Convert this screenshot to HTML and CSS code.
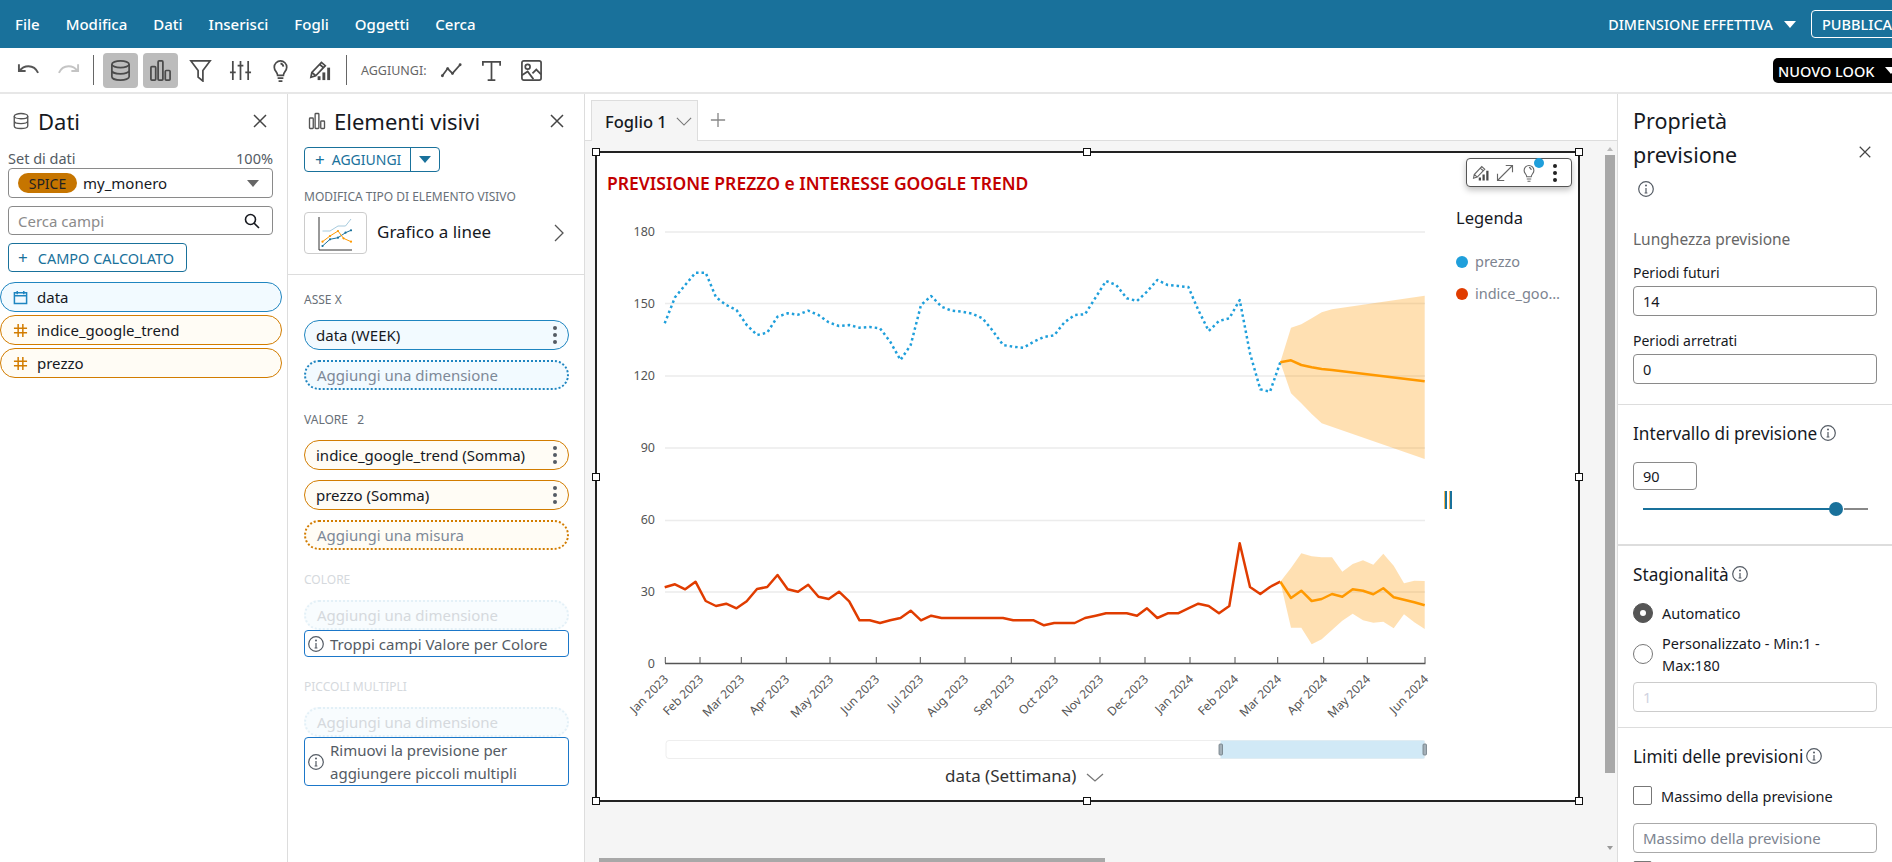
FILE: index.html
```html
<!DOCTYPE html>
<html lang="it">
<head>
    <meta charset="utf-8">
    <title>Analisi - Previsione prezzo</title>
    <link rel="stylesheet" href="styles.css">
</head>
<body>
    <svg class="defs" width="0" height="0">
        <defs>
            <symbol id="i-close" viewBox="0 0 16 16"><path d="M2 2l12 12M14 2L2 14"/></symbol>
            <symbol id="i-info" viewBox="0 0 16 16"><circle cx="8" cy="8" r="7.300"/><path d="M8 7v5M6.600 12h2.800"/><circle class="dot" cx="8" cy="4.400" r="1"/></symbol>
            <symbol id="i-db" viewBox="0 0 24 24"><ellipse cx="12" cy="5.500" rx="9" ry="3.500"/><path d="M3 5.500v13c0 2 4 3.500 9 3.500s9-1.500 9-3.500v-13M3 12c0 2 4 3.500 9 3.500s9-1.500 9-3.500"/></symbol>
            <symbol id="i-bars" viewBox="0 0 24 24"><rect x="2" y="8" width="5" height="14" rx="1"/><rect x="9.500" y="2" width="5" height="20" rx="1"/><rect x="17" y="12" width="5" height="10" rx="1"/></symbol>
            <symbol id="i-kebab" viewBox="0 0 6 20"><circle cx="3" cy="3" r="2"/><circle cx="3" cy="10" r="2"/><circle cx="3" cy="17" r="2"/></symbol>
            <symbol id="i-hash" viewBox="0 0 16 16"><path d="M5.500 1v14M10.500 1v14M1 5.500h14M1 10.500h14"/></symbol>
            <symbol id="i-pencilbars" viewBox="0 0 24 24"><path d="M2 19l1-5L13 3.500l4 3.500L7 17.500zM3 14l4 3.500M11 5.500l4 3.500"/><rect class="solid" x="9" y="18" width="3" height="4"/><rect class="solid" x="14" y="14" width="3" height="8"/><rect class="solid" x="19" y="9" width="3" height="13"/></symbol>
            <symbol id="i-bulb" viewBox="0 0 24 24"><path d="M9 17c0-3-3.500-4.500-3.500-8.500a6.500 6.500 0 0 1 13 0C18.500 12.500 15 14 15 17zM9 20h6M10 23h4M12 4.500a4 4 0 0 1 3 3.500"/></symbol>
        </defs>
    </svg>

    <div class="app">
        <header class="topbar">
            <nav class="menu">
                <span>File</span><span>Modifica</span><span>Dati</span><span>Inserisci</span><span>Fogli</span><span>Oggetti</span><span>Cerca</span>
            </nav>
            <div class="topbar-right">
                <span class="size-label">DIMENSIONE EFFETTIVA</span>
                <span class="caret caret-white"></span>
                <span class="publish">PUBBLICA</span>
            </div>
        </header>

        <div class="toolbar">
            <svg class="tool undo" viewBox="0 0 24 14"><path d="M2 1v7h7M2.500 8C5 4.500 8.500 3 12 3c4.500 0 8 2.500 10 7"/></svg>
            <svg class="tool redo" viewBox="0 0 24 14"><path d="M22 1v7h-7M21.500 8C19 4.500 15.500 3 12 3 7.500 3 4 5.500 2 10"/></svg>
            <span class="tool-sep"></span>
            <span class="tool-btn active"><svg class="tool-icon"><use href="#i-db"/></svg></span>
            <span class="tool-btn active"><svg class="tool-icon"><use href="#i-bars"/></svg></span>
            <span class="tool-btn"><svg class="tool-icon" viewBox="0 0 24 24"><path d="M2 2h20l-7.500 10v11l-5-4v-7z"/></svg></span>
            <span class="tool-btn"><svg class="tool-icon" viewBox="0 0 24 24"><path d="M4 2v20M12 2v20M20 2v20M1 14h6M9 7h6M17 14h6"/></svg></span>
            <span class="tool-btn"><svg class="tool-icon"><use href="#i-bulb"/></svg></span>
            <span class="tool-btn"><svg class="tool-icon"><use href="#i-pencilbars"/></svg></span>
            <span class="tool-sep sep-second"></span>
            <span class="add-label">AGGIUNGI:</span>
            <span class="tool-btn"><svg class="tool-icon" viewBox="0 0 24 24"><path d="M2 18l6-8 5 5 8-9"/><circle class="solid" cx="2.500" cy="17.500" r="1.500"/><circle class="solid" cx="8" cy="10" r="1.500"/><circle class="solid" cx="13" cy="15" r="1.500"/><circle class="solid" cx="21" cy="6" r="1.500"/></svg></span>
            <span class="tool-btn"><svg class="tool-icon" viewBox="0 0 24 24"><path d="M3 7V3h18v4M12 3v19M8 22h8"/></svg></span>
            <span class="tool-btn"><svg class="tool-icon" viewBox="0 0 24 24"><rect x="2" y="2" width="20" height="20" rx="2"/><circle cx="8" cy="8" r="2.500"/><path d="M2 17l6-4 6 8M13 15l4-4 5 5"/></svg></span>
            <span class="new-look">NUOVO LOOK<span class="caret caret-white"></span></span>
        </div>

        <main class="workspace">
            <aside class="panel panel-data">
                <div class="panel-head">
                    <svg class="head-icon"><use href="#i-db"/></svg>
                    <h2>Dati</h2>
                    <svg class="close"><use href="#i-close"/></svg>
                </div>
                <div class="dataset-row"><span>Set di dati</span><span>100%</span></div>
                <div class="box dataset-select">
                    <span class="spice">SPICE</span>
                    <span>my_monero</span>
                    <span class="caret caret-grey"></span>
                </div>
                <div class="box search">
                    <span>Cerca campi</span>
                    <svg class="search-icon" viewBox="0 0 16 16"><circle cx="6.500" cy="6.500" r="5"/><path d="M10 10l5 5"/></svg>
                </div>
                <div class="calc-btn"><span class="plus">+</span>CAMPO CALCOLATO</div>
                <ul class="fields">
                    <li class="field field-date">
                        <svg class="field-icon" viewBox="0 0 16 16"><path d="M1.500 3h13v11.500h-13zM1.500 6h13M4.500 1v3.500M11.500 1v3.500"/></svg>data
                    </li>
                    <li class="field field-num"><svg class="field-icon"><use href="#i-hash"/></svg>indice_google_trend</li>
                    <li class="field field-num"><svg class="field-icon"><use href="#i-hash"/></svg>prezzo</li>
                </ul>
            </aside>

            <aside class="panel panel-visuals">
                <div class="panel-head">
                    <svg class="head-icon"><use href="#i-bars"/></svg>
                    <h2>Elementi visivi</h2>
                    <svg class="close"><use href="#i-close"/></svg>
                </div>
                <div class="add-btn">
                    <span class="add-main"><span class="plus">+</span>AGGIUNGI</span>
                    <span class="add-drop"><span class="caret caret-blue"></span></span>
                </div>
                <div class="well-label type-label">MODIFICA TIPO DI ELEMENTO VISIVO</div>
                <div class="type-row">
                    <span class="type-thumb">
                        <svg viewBox="0 0 61 40" width="61" height="40">
                            <path d="M14 4v33h33" fill="none" stroke="#333" stroke-width="1"/>
                            <path d="M17.500 18H25l8-5h7.500l5.500-7" fill="none" stroke="#8fbcd4" stroke-width="0.800"/>
                            <path d="M17.500 33L25 26.300l8-1.600 7.500-5 5.500-2.400" fill="none" stroke="#19719b" stroke-width="1"/>
                            <path d="M17.500 28.700L25 23l8-5 5.500 7.300 7.500 3.400" fill="none" stroke="#ff9900" stroke-width="1"/>
                            <path d="M17.500 33h0M25 26.300h0M33 24.700h0M40.500 19.700h0M46 17.300h0" fill="none" stroke="#19719b" stroke-width="2.200" stroke-linecap="round"/>
                            <path d="M17.500 28.700h0M25 23h0M33 18h0M38.500 25.300h0M46 28.700h0" fill="none" stroke="#ff9900" stroke-width="2.200" stroke-linecap="round"/>
                        </svg>
                    </span>
                    <span class="type-name">Grafico a linee</span>
                    <svg class="chevron" viewBox="0 0 10 18"><path d="M1 1l8 8-8 8"/></svg>
                </div>
                <div class="wells">
                    <div class="well-label">ASSE X</div>
                    <div class="pill pill-date">data (WEEK)<svg class="kebab"><use href="#i-kebab"/></svg></div>
                    <div class="pill pill-drop pill-drop-date">Aggiungi una dimensione</div>

                    <div class="well-label label-next">VALORE&nbsp;&nbsp;&nbsp;2</div>
                    <div class="pill pill-num">indice_google_trend (Somma)<svg class="kebab"><use href="#i-kebab"/></svg></div>
                    <div class="pill pill-num">prezzo (Somma)<svg class="kebab"><use href="#i-kebab"/></svg></div>
                    <div class="pill pill-drop pill-drop-num">Aggiungi una misura</div>

                    <div class="well-label label-next label-off">COLORE</div>
                    <div class="pill pill-drop pill-off">Aggiungi una dimensione</div>
                    <div class="notice">
                        <svg class="info"><use href="#i-info"/></svg>
                        <span>Troppi campi Valore per Colore</span>
                    </div>

                    <div class="well-label label-next label-off">PICCOLI MULTIPLI</div>
                    <div class="pill pill-drop pill-off">Aggiungi una dimensione</div>
                    <div class="notice notice-tall">
                        <svg class="info"><use href="#i-info"/></svg>
                        <span>Rimuovi la previsione per aggiungere piccoli multipli</span>
                    </div>
                </div>
            </aside>

            <section class="sheet">
                <div class="tabs">
                    <div class="tab">
                        <span>Foglio 1</span>
                        <svg class="tab-chevron" viewBox="0 0 18 10"><path d="M1 1l8 8 8-8"/></svg>
                    </div>
                    <svg class="tab-add" viewBox="0 0 18 18"><path d="M9 1v16M1 9h16"/></svg>
                </div>

                <div class="stage">
                    <div class="visual">
                        <h3 class="visual-title">PREVISIONE PREZZO e INTERESSE GOOGLE TREND</h3>

                        <svg class="chart" viewBox="597 153 981 647">
                            <g class="grid">
                                <path d="M665 232H1425M665 303.500H1425M665 376H1425M665 448H1425M665 520.500H1425M665 592H1425"/>
                            </g>
                            <g class="y-labels">
                                <text x="655" y="236">180</text>
                                <text x="655" y="308">150</text>
                                <text x="655" y="380">120</text>
                                <text x="655" y="452">90</text>
                                <text x="655" y="524">60</text>
                                <text x="655" y="596">30</text>
                                <text x="655" y="668">0</text>
                            </g>

                            <polygon class="band" points="1280.300,362.300 1291,327.700 1301.300,324.300 1311.700,318.300 1321.700,312.300 1332,309.300 1424.700,295.700 1424.700,459 1321.700,423.300 1311.700,414 1301.300,403.300 1291,393.300"/>
                            <polygon class="band" points="1280.300,581.700 1291,568 1301.300,553.300 1311.700,556.300 1321.700,557.300 1332,557.300 1342.300,571.700 1352.700,564 1363,560.300 1373.300,564.700 1383.300,553.700 1393.700,565.700 1404,583.300 1414.300,580.700 1424.700,581 1424.700,629 1414.300,622.300 1404,614.300 1393.700,628.300 1383.300,621.700 1373.300,622.700 1363,620.300 1352.700,613.700 1342.300,620.700 1332,630 1321.700,639.300 1311.700,644.300 1301.300,627.700 1291,627.700"/>

                            <polyline class="line line-blue" points="664.700,323.300 675,297.300 685.200,285 695.500,272.700 705.700,272.700 716,297.300 726.200,305 736.500,310 746.700,325 757,335 767.200,332.700 777.500,316.700 787.700,313.300 798,314.700 808.200,310.700 818.500,315 828.700,322.300 839,326 849.200,325 859.500,327.700 869.700,327 880,328.300 890.200,341.700 900.500,360 910.700,345 921,305 931.200,296 941.500,306.700 951.700,310.700 962,311.700 972.200,313.700 982.500,318.300 992.700,330.700 1003,345 1013.200,346.700 1023.500,347.700 1033.700,341.700 1044,337 1054.200,335.300 1064.500,322.300 1074.700,315 1085,314.300 1095.700,297.300 1106,281 1116.300,285 1126.700,298.300 1137,301 1147,291.700 1157.300,280 1167.700,285 1178,286 1188.300,287 1198.300,310 1208.700,331 1219,321 1229.300,318.300 1239.700,300 1250,353.300 1260.300,389.300 1270,391.700 1280.300,362.300"/>
                            <polyline class="line line-orange" points="1280.300,362.300 1291,360.300 1301.300,365 1311.700,367.300 1321.700,369 1332,370 1424.700,381.300"/>
                            <polyline class="line line-red" points="664.700,587.300 675,584.300 685.200,589.300 695.500,581.700 705.700,601 716,606 726.200,603.700 736.500,608.300 746.700,601.300 757,589 767.200,587 777.500,575 787.700,589.300 798,591.700 808.200,584.700 818.500,596.700 828.700,599 839,591.700 849.200,601.300 859.500,620.300 869.700,620.300 880,623 890.200,620.300 900.500,618 910.700,610.700 921,620.300 931.200,615.700 941.500,618 951.700,618 962,618 972.200,618 982.500,618 992.700,618 1003,618 1013.200,620.300 1023.500,620.300 1033.700,620.300 1044,625.300 1054.200,623 1064.500,623 1074.700,623 1085,618 1095.700,615.700 1106,613.300 1116.300,613.300 1126.700,613.300 1137,615.700 1147,608.300 1157.300,618 1167.700,613.300 1178,613.300 1188.300,608.300 1198.300,603.700 1208.700,606 1219,613.300 1229.300,606 1239.700,543.300 1250,587 1260.300,594 1270,587 1280.300,581.700"/>
                            <polyline class="line line-orange" points="1280.300,581.700 1291,598 1301.300,590.700 1311.700,601 1321.700,599 1332,594 1342.300,596.700 1352.700,589.300 1363,590.700 1373.300,594.300 1383.300,588.300 1393.700,597.300 1404,599.700 1414.300,602.300 1424.700,605.300"/>

                            <path class="axis" d="M665 663.500H1425.500"/>
                            <path class="ticks" d="M665.300 657V663M700 657V663M741.300 657V663M786.300 657V663M830 657V663M876.300 657V663M920.300 657V663M965 657V663M1011.300 657V663M1055 657V663M1100 657V663M1145 657V663M1190 657V663M1235 657V663M1277.700 657V663M1323.700 657V663M1367.300 657V663M1425 657V663"/>
                            <g class="x-labels">
                                <text x="669" y="680" transform="rotate(-45 669 680)">Jan 2023</text>
                                <text x="704" y="680" transform="rotate(-45 704 680)">Feb 2023</text>
                                <text x="745" y="680" transform="rotate(-45 745 680)">Mar 2023</text>
                                <text x="790" y="680" transform="rotate(-45 790 680)">Apr 2023</text>
                                <text x="834" y="680" transform="rotate(-45 834 680)">May 2023</text>
                                <text x="880" y="680" transform="rotate(-45 880 680)">Jun 2023</text>
                                <text x="924" y="680" transform="rotate(-45 924 680)">Jul 2023</text>
                                <text x="969" y="680" transform="rotate(-45 969 680)">Aug 2023</text>
                                <text x="1015" y="680" transform="rotate(-45 1015 680)">Sep 2023</text>
                                <text x="1059" y="680" transform="rotate(-45 1059 680)">Oct 2023</text>
                                <text x="1104" y="680" transform="rotate(-45 1104 680)">Nov 2023</text>
                                <text x="1149" y="680" transform="rotate(-45 1149 680)">Dec 2023</text>
                                <text x="1194" y="680" transform="rotate(-45 1194 680)">Jan 2024</text>
                                <text x="1239" y="680" transform="rotate(-45 1239 680)">Feb 2024</text>
                                <text x="1282" y="680" transform="rotate(-45 1282 680)">Mar 2024</text>
                                <text x="1328" y="680" transform="rotate(-45 1328 680)">Apr 2024</text>
                                <text x="1371" y="680" transform="rotate(-45 1371 680)">May 2024</text>
                                <text x="1429" y="680" transform="rotate(-45 1429 680)">Jun 2024</text>
                            </g>

                            <rect class="range" x="666" y="740.500" width="759" height="18" rx="3"/>
                            <rect class="range-on" x="1220.500" y="740.500" width="204" height="18"/>
                            <rect class="range-grip" x="1219" y="744" width="3.500" height="11" rx="1"/>
                            <rect class="range-grip" x="1423" y="744" width="3.500" height="11" rx="1"/>

                            <text class="axis-title" x="945" y="782">data (Settimana)</text>
                            <path class="axis-chevron" d="M1087 774l8 7 8-7"/>

                            <text class="legend-title" x="1456" y="224">Legenda</text>
                            <circle cx="1462" cy="262" r="6" fill="#1f9fdb"/>
                            <text class="legend-item" x="1475" y="267">prezzo</text>
                            <circle cx="1462" cy="294" r="6" fill="#e03c00"/>
                            <text class="legend-item" x="1475" y="299">indice_goo…</text>

                            <path class="legend-grip-o" d="M1444.500 491v18M1449.500 491v18"/>
                            <path class="legend-grip" d="M1446 491v18M1451 491v18"/>
                        </svg>

                        <div class="visual-menu">
                            <svg class="menu-icon"><use href="#i-pencilbars"/></svg>
                            <svg class="menu-icon" viewBox="0 0 24 24"><path d="M2 22L22 2M13 2h9v9M2 13v9h9"/></svg>
                            <svg class="menu-icon"><use href="#i-bulb"/></svg>
                            <svg class="kebab kebab-dark"><use href="#i-kebab"/></svg>
                            <span class="menu-dot"></span>
                        </div>

                        <span class="handle h-tl"></span><span class="handle h-tc"></span><span class="handle h-tr"></span>
                        <span class="handle h-ml"></span><span class="handle h-mr"></span>
                        <span class="handle h-bl"></span><span class="handle h-bc"></span><span class="handle h-br"></span>
                    </div>

                    <div class="vscroll"><span class="arrow-up"></span><span class="vthumb"></span><span class="arrow-down"></span></div>
                    <div class="hscroll"><span class="hthumb"></span></div>
                </div>
            </section>

            <aside class="panel panel-forecast">
                <div class="forecast-head">
                    <h2>Proprietà<br>previsione</h2>
                    <svg class="close"><use href="#i-close"/></svg>
                </div>
                <svg class="info info-lone"><use href="#i-info"/></svg>

                <section class="fc-section fc-length">
                    <div class="fc-muted">Lunghezza previsione</div>
                    <label class="fc-label">Periodi futuri</label>
                    <div class="input">14</div>
                    <label class="fc-label fc-label-next">Periodi arretrati</label>
                    <div class="input">0</div>
                </section>

                <section class="fc-section fc-interval">
                    <div class="fc-title">Intervallo di previsione <svg class="info"><use href="#i-info"/></svg></div>
                    <div class="input input-small">90</div>
                    <div class="slider"><span class="slider-on"></span><span class="slider-knob"></span><span class="slider-off"></span></div>
                </section>

                <section class="fc-section fc-season">
                    <div class="fc-title">Stagionalità <svg class="info"><use href="#i-info"/></svg></div>
                    <div class="radio-row"><span class="radio radio-on"></span><span>Automatico</span></div>
                    <div class="radio-row radio-row-two"><span class="radio"></span><span class="radio-text">Personalizzato - Min:1 - Max:180</span></div>
                    <div class="input input-off">1</div>
                </section>

                <section class="fc-section fc-limits">
                    <div class="fc-title">Limiti delle previsioni <svg class="info"><use href="#i-info"/></svg></div>
                    <div class="check-row"><span class="check"></span><span>Massimo della previsione</span></div>
                    <div class="input input-hint">Massimo della previsione</div>
                    <div class="check-row"><span class="check"></span></div>
                </section>
            </aside>
        </main>
    </div>
</body>
</html>
```

FILE: styles.css
```css
* {
    box-sizing: border-box;
}
html, body {
    height: 100%;
}
body {
    margin: 0;
    overflow: hidden;
    font-family: "Noto Sans", Arial, sans-serif;
    font-size: 15px;
    color: #16191f;
    background: #fff;
}
h2, h3 {
    margin: 0;
    font-weight: 400;
}
ul {
    list-style: none;
    margin: 0;
    padding: 0;
}
.defs {
    position: absolute;
}
.app {
    display: flex;
    flex-direction: column;
    height: 100vh;
}

/* top bar */
.topbar {
    flex: none;
    display: flex;
    justify-content: space-between;
    align-items: center;
    height: 48px;
    padding-left: 15px;
    background: #19719b;
    color: #fff;
    font-weight: 500;
    font-size: 15px;
    white-space: nowrap;
}
.menu {
    display: flex;
    gap: 26px;
}
.topbar-right {
    display: flex;
    align-items: center;
    margin-right: -9px;
}
.size-label {
    font-size: 14.300px;
}
.caret {
    flex: none;
    display: inline-block;
    width: 0;
    height: 0;
    border-left: 6px solid transparent;
    border-right: 6px solid transparent;
    border-top: 7px solid #fff;
}
.caret-white {
    margin: 0 15px 0 11px;
}
.caret-grey {
    margin-left: auto;
    margin-right: 13px;
    border-top-color: #666;
}
.caret-blue {
    border-top-color: #19719b;
}
.publish {
    display: flex;
    align-items: center;
    width: 90px;
    height: 28px;
    padding-left: 10px;
    border: 1px solid #fff;
    border-radius: 4px;
    font-size: 14.500px;
}

/* toolbar */
.toolbar {
    flex: none;
    display: flex;
    align-items: center;
    height: 46px;
    padding-left: 17px;
    border-bottom: 2px solid #e7e7e7;
    position: relative;
}
.tool {
    width: 23px;
    height: 14px;
    fill: none;
    stroke: #555;
    stroke-width: 2;
}
.redo {
    margin-left: 17px;
    stroke: #c4c4c4;
}
.tool-sep {
    width: 1px;
    height: 30px;
    margin: 0 9px 0 13px;
    background: #666;
}
.sep-second {
    margin: 0 14px 0 3px;
}
.tool-btn {
    display: flex;
    align-items: center;
    justify-content: center;
    width: 35px;
    height: 35px;
    margin-right: 5px;
    border-radius: 4px;
}
.tool-btn.active {
    background: #bcbcbc;
}
.tool-icon {
    width: 23px;
    height: 23px;
    fill: none;
    stroke: #4a4a4a;
    stroke-width: 1.800;
}
.solid {
    fill: currentColor;
    stroke: none;
    color: #4a4a4a;
}
.add-label {
    width: 73px;
    font-size: 12.500px;
    color: #666;
}
.new-look {
    position: absolute;
    left: 1773px;
    top: 10px;
    display: flex;
    align-items: center;
    width: 130px;
    height: 25px;
    padding-left: 5px;
    background: #000;
    border-radius: 5px;
    color: #fff;
    font-size: 14.500px;
    font-weight: 500;
    white-space: nowrap;
}

/* panels */
.workspace {
    flex: 1;
    display: flex;
    min-height: 0;
}
.panel {
    flex: none;
    border-right: 1px solid #ddd;
    overflow: hidden;
}
.panel-data {
    width: 288px;
}
.panel-visuals {
    width: 297px;
    padding: 0 15px 0 16px;
}
.panel-head {
    display: flex;
    align-items: center;
    height: 50px;
    padding-top: 3px;
}
.panel-head h2 {
    font-size: 22px;
}
.panel-data .panel-head {
    padding-left: 12px;
}
.panel-visuals .panel-head {
    padding-left: 4px;
}
.head-icon {
    width: 18px;
    height: 18px;
    margin-right: 8px;
    fill: none;
    stroke: #555;
    stroke-width: 1.800;
}
.close {
    width: 16px;
    height: 16px;
    margin-left: auto;
    fill: none;
    stroke: #444;
    stroke-width: 1.500;
}
.panel-data .close {
    margin-right: 19px;
}
.panel-visuals .close {
    margin-right: 4px;
}
.dataset-row {
    display: flex;
    justify-content: space-between;
    width: 265px;
    margin: 4px 0 0 8px;
    height: 20px;
    line-height: 20px;
    font-size: 14.500px;
    color: #545b64;
}
.box {
    display: flex;
    align-items: center;
    width: 265px;
    margin-left: 8px;
    border: 1px solid #8a8a8a;
    border-radius: 4px;
}
.dataset-select {
    height: 30px;
    padding-left: 9px;
    gap: 6px;
}
.spice {
    display: flex;
    align-items: center;
    justify-content: center;
    width: 59px;
    height: 20px;
    background: #c67500;
    border-radius: 10px;
    font-size: 14px;
    color: #222;
}
.search {
    justify-content: space-between;
    height: 29px;
    margin-top: 8px;
    padding: 0 12px 0 9px;
    color: #8b8b8b;
}
.search-icon {
    width: 16px;
    height: 16px;
    fill: none;
    stroke: #16191f;
    stroke-width: 1.600;
}
.calc-btn {
    display: flex;
    align-items: center;
    width: 179px;
    height: 29px;
    margin: 8px 0 10px 8px;
    padding-left: 9px;
    border: 1px solid #19719b;
    border-radius: 4px;
    color: #19719b;
    font-size: 14.500px;
    white-space: nowrap;
}
.plus {
    margin-right: 10px;
    font-size: 17px;
    line-height: 1;
}
.fields {
    display: flex;
    flex-direction: column;
    gap: 3px;
    width: 282px;
}
.field {
    display: flex;
    align-items: center;
    height: 30px;
    padding-left: 12px;
    border: 1px solid;
    border-radius: 15px;
}
.field-date {
    border-color: #1f85c0;
    background: #f2faff;
}
.field-num {
    border-color: #d27c00;
    background: #fffcf5;
}
.field-icon {
    width: 15px;
    height: 15px;
    margin-right: 9px;
    fill: none;
    stroke-width: 1.600;
}
.field-date .field-icon {
    stroke: #1f85c0;
}
.field-num .field-icon {
    stroke: #d27c00;
}

/* visuals panel */
.add-btn {
    display: flex;
    width: 136px;
    height: 25px;
    margin-top: 3px;
    border: 1px solid #19719b;
    border-radius: 4px;
    color: #19719b;
    font-size: 14px;
}
.add-main {
    display: flex;
    align-items: center;
    width: 106px;
    padding-left: 10px;
    border-right: 1px solid #19719b;
}
.add-main .plus {
    margin-right: 7px;
}
.add-drop {
    flex: 1;
    display: flex;
    align-items: center;
    justify-content: center;
}
.well-label {
    height: 18px;
    line-height: 20px;
    font-size: 12px;
    color: #687078;
    white-space: nowrap;
}
.type-label {
    margin-top: 15px;
}
.type-row {
    display: flex;
    align-items: center;
    height: 42px;
    margin-top: 7px;
}
.type-thumb {
    display: flex;
    align-items: center;
    justify-content: center;
    width: 63px;
    height: 42px;
    margin-right: 10px;
    border: 1px solid #ccc;
    border-radius: 4px;
}
.type-name {
    padding-bottom: 3px;
    font-size: 17px;
}
.chevron {
    width: 10px;
    height: 18px;
    margin: 0 5px 0 auto;
    fill: none;
    stroke: #555;
    stroke-width: 1.300;
}
.wells {
    margin: 20px -15px 0 -16px;
    padding: 15px 15px 0 16px;
    border-top: 1px solid #ddd;
}
.pill {
    display: flex;
    align-items: center;
    justify-content: space-between;
    height: 30px;
    margin-top: 10px;
    padding: 0 10px 0 11px;
    border: 1px solid;
    border-radius: 15px;
    white-space: nowrap;
}
.well-label + .pill {
    margin-top: 12px;
}
.pill-date {
    border-color: #1f85c0;
    background: #f2faff;
}
.pill-num {
    border-color: #d27c00;
    background: #fffcf5;
}
.pill-drop {
    border-width: 2px;
    border-style: dotted;
    color: #7d8998;
}
.pill-drop-date {
    border-color: #1f85c0;
    background: #f2faff;
}
.pill-drop-num {
    border-color: #d27c00;
    background: #fffcf5;
}
.pill-off {
    border-color: #e3f0f7;
    background: #f8fcfe;
    color: #d5d9dd;
}
.kebab {
    width: 6px;
    height: 20px;
    fill: #545b64;
}
.kebab-dark {
    fill: #222;
    margin-left: 8px;
}
.label-next {
    margin-top: 20px;
}
.label-off {
    color: #d5d9dd;
}
.notice {
    display: flex;
    align-items: center;
    min-height: 27px;
    padding: 0 3px;
    border: 1px solid #1b77c9;
    border-radius: 4px;
    color: #545b64;
    white-space: nowrap;
}
.notice-tall {
    height: 49px;
    white-space: normal;
    line-height: 23px;
}
.info {
    flex: none;
    width: 16px;
    height: 16px;
    fill: none;
    stroke: #545b64;
    stroke-width: 1.200;
}
.info .dot, .dot {
    fill: #545b64;
    stroke: none;
}
.notice .info {
    margin-right: 6px;
}

/* sheet */
.sheet {
    flex: 1;
    min-width: 0;
    display: flex;
    flex-direction: column;
    border-right: 1px solid #ddd;
}
.tabs {
    flex: none;
    display: flex;
    align-items: center;
    height: 47px;
    padding-left: 6px;
    border-bottom: 1px solid #ddd;
}
.tab {
    display: flex;
    align-items: center;
    align-self: flex-end;
    width: 107px;
    height: 41px;
    margin-bottom: -1px;
    padding: 0 5px 0 13px;
    background: #f5f5f5;
    border: 1px solid #ddd;
    border-bottom: 0;
    font-size: 16.500px;
    font-weight: 500;
}
.tab-chevron {
    width: 16px;
    height: 9px;
    margin-left: auto;
    fill: none;
    stroke: #777;
    stroke-width: 1.300;
}
.tab-add {
    width: 16px;
    height: 16px;
    margin: 5px 0 0 12px;
    fill: none;
    stroke: #888;
    stroke-width: 1.500;
}
.stage {
    flex: 1;
    position: relative;
    padding: 10px 0 0 10px;
    background: #f5f5f5;
}
.visual {
    position: relative;
    width: 985px;
    height: 651px;
    border: 2px solid #222;
    background: #fff;
}
.visual-title {
    position: absolute;
    left: 10px;
    top: 18px;
    font-size: 17.500px;
    font-weight: 600;
    color: #c30000;
    white-space: nowrap;
    z-index: 1;
}
.chart {
    display: block;
    width: 981px;
    height: 647px;
}
.chart text {
    font-family: "Noto Sans", Arial, sans-serif;
}
.grid path {
    fill: none;
    stroke: #ececec;
    stroke-width: 1.500;
}
.y-labels text {
    font-size: 12.500px;
    fill: #555;
    text-anchor: end;
}
.x-labels text {
    font-size: 12px;
    fill: #555;
    text-anchor: end;
}
.band {
    fill: #ff9900;
    fill-opacity: 0.3;
}
.line {
    fill: none;
    stroke-width: 2.500;
    stroke-linejoin: round;
}
.line-blue {
    stroke: #1f9fdb;
    stroke-dasharray: 2.500 3;
}
.line-red {
    stroke: #e03c00;
}
.line-orange {
    stroke: #ff9900;
}
.axis, .ticks {
    fill: none;
    stroke: #555;
}
.axis {
    stroke-width: 1.500;
}
.range {
    fill: #fff;
    stroke: #eee;
}
.range-on {
    fill: #d1e9f6;
}
.range-grip {
    fill: #a4b0b8;
    stroke: #6f7b83;
    stroke-width: 0.800;
}
.axis-title {
    font-size: 17px;
    fill: #333;
}
.axis-chevron {
    fill: none;
    stroke: #777;
    stroke-width: 1.300;
}
.legend-title {
    font-size: 16.500px;
    fill: #16191f;
}
.legend-item {
    font-size: 14.500px;
    fill: #7d8490;
}
.legend-grip-o {
    fill: none;
    stroke: #ffb84d;
    stroke-width: 1;
}
.legend-grip {
    fill: none;
    stroke: #19719b;
    stroke-width: 2;
}
.visual-menu {
    position: absolute;
    right: 6px;
    top: 5px;
    display: flex;
    align-items: center;
    gap: 6px;
    width: 106px;
    height: 29px;
    padding-left: 5px;
    background: #fff;
    border: 1px solid #555;
    border-radius: 4px;
    box-shadow: 0 3px 6px rgba(0, 0, 0, 0.25);
}
.menu-icon {
    width: 18px;
    height: 18px;
    fill: none;
    stroke: #666;
    stroke-width: 1.500;
}
.menu-dot {
    position: absolute;
    left: 67px;
    top: -1px;
    width: 10px;
    height: 10px;
    border-radius: 50%;
    background: #1f9fdb;
}
.handle {
    position: absolute;
    width: 8px;
    height: 8px;
    background: #fff;
    border: 1px solid #111;
    z-index: 2;
}
.h-tl { left: -5px; top: -5px; }
.h-tc { left: 486px; top: -5px; }
.h-tr { right: -5px; top: -5px; }
.h-ml { left: -5px; top: 320px; }
.h-mr { right: -5px; top: 320px; }
.h-bl { left: -5px; bottom: -5px; }
.h-bc { left: 486px; bottom: -5px; }
.h-br { right: -5px; bottom: -5px; }
.vscroll {
    position: absolute;
    right: 2px;
    top: 0;
    bottom: 0;
    width: 10px;
}
.vthumb {
    position: absolute;
    top: 14px;
    left: 0;
    width: 10px;
    height: 618px;
    background: #a8a8a8;
}
.arrow-up, .arrow-down {
    position: absolute;
    left: 2px;
    width: 0;
    height: 0;
    border-left: 3px solid transparent;
    border-right: 3px solid transparent;
}
.arrow-up {
    top: 6px;
    border-bottom: 4px solid #bbb;
}
.arrow-down {
    bottom: 12px;
    border-top: 4px solid #999;
}
.hscroll {
    position: absolute;
    left: 14px;
    bottom: 0;
    width: 1000px;
    height: 4px;
}
.hthumb {
    display: block;
    width: 506px;
    height: 4px;
    background: #a8a8a8;
}

/* forecast panel */
.panel-forecast {
    width: 274px;
    border-right: 0;
}
.forecast-head {
    display: flex;
    padding: 10px 15px 0;
}
.forecast-head h2 {
    font-size: 21.500px;
    line-height: 34px;
}
.forecast-head .close {
    width: 14px;
    height: 14px;
    margin: 41px 5px 0 auto;
    stroke-width: 1.400;
}
.info-lone {
    display: block;
    margin: 9px 0 0 20px;
}
.fc-section {
    padding: 0 15px;
    border-bottom: 1px solid #ddd;
}
.fc-muted {
    height: 22px;
    line-height: 22px;
    font-size: 15.500px;
    color: #666;
}
.fc-label {
    display: block;
    margin-top: 13px;
    height: 20px;
    line-height: 20px;
    font-size: 14px;
}
.fc-label-next {
    margin-top: 15px;
}
.input {
    display: flex;
    align-items: center;
    height: 30px;
    margin-top: 3px;
    padding-left: 9px;
    border: 1px solid #8a8a8a;
    border-radius: 4px;
    font-size: 14.500px;
}
.fc-length {
    height: 208px;
    padding-top: 31px;
}
.fc-interval {
    height: 141px;
    padding-top: 16px;
    border-bottom-width: 2px;
}
.fc-title {
    display: flex;
    align-items: center;
    gap: 3px;
    height: 24px;
    font-size: 17.200px;
}
.input-small {
    width: 64px;
    height: 28px;
    margin-top: 17px;
}
.slider {
    position: relative;
    height: 14px;
    margin: 12px 9px 0 10px;
}
.slider-on {
    position: absolute;
    left: 0;
    right: 31px;
    top: 6px;
    height: 2px;
    background: #19719b;
}
.slider-off {
    position: absolute;
    left: 201px;
    right: 0;
    top: 6px;
    height: 2px;
    background: #888;
}
.slider-knob {
    position: absolute;
    left: 186px;
    top: 0;
    width: 14px;
    height: 14px;
    border-radius: 50%;
    background: #19719b;
}
.fc-season {
    height: 182px;
    padding-top: 16px;
}
.radio-row {
    display: flex;
    align-items: center;
    gap: 9px;
    margin-top: 17px;
    height: 20px;
    font-size: 14.500px;
}
.radio-row-two {
    margin-top: 9px;
    height: 44px;
    line-height: 22px;
}
.radio-text {
    max-width: 190px;
}
.radio {
    flex: none;
    position: relative;
    width: 20px;
    height: 20px;
    border: 1px solid #777;
    border-radius: 50%;
}
.radio-on {
    background: #555;
    border-color: #555;
}
.radio-on::after {
    content: "";
    position: absolute;
    left: 6px;
    top: 6px;
    width: 6px;
    height: 6px;
    border-radius: 50%;
    background: #fff;
}
.input-off {
    height: 30px;
    margin-top: 6px;
    border-color: #ccc;
    color: #cfd2e0;
}
.fc-limits {
    padding-top: 16px;
    border-bottom: 0;
}
.check-row {
    display: flex;
    align-items: center;
    gap: 9px;
    height: 19px;
    margin-top: 18px;
    font-size: 14.500px;
}
.check {
    flex: none;
    width: 19px;
    height: 19px;
    border: 1px solid #777;
    border-radius: 2px;
}
.input-hint {
    height: 30px;
    margin-top: 18px;
    border-color: #aaa;
    color: #7d8490;
    font-size: 15px;
}
.input-hint + .check-row {
    margin-top: 8px;
}
```
